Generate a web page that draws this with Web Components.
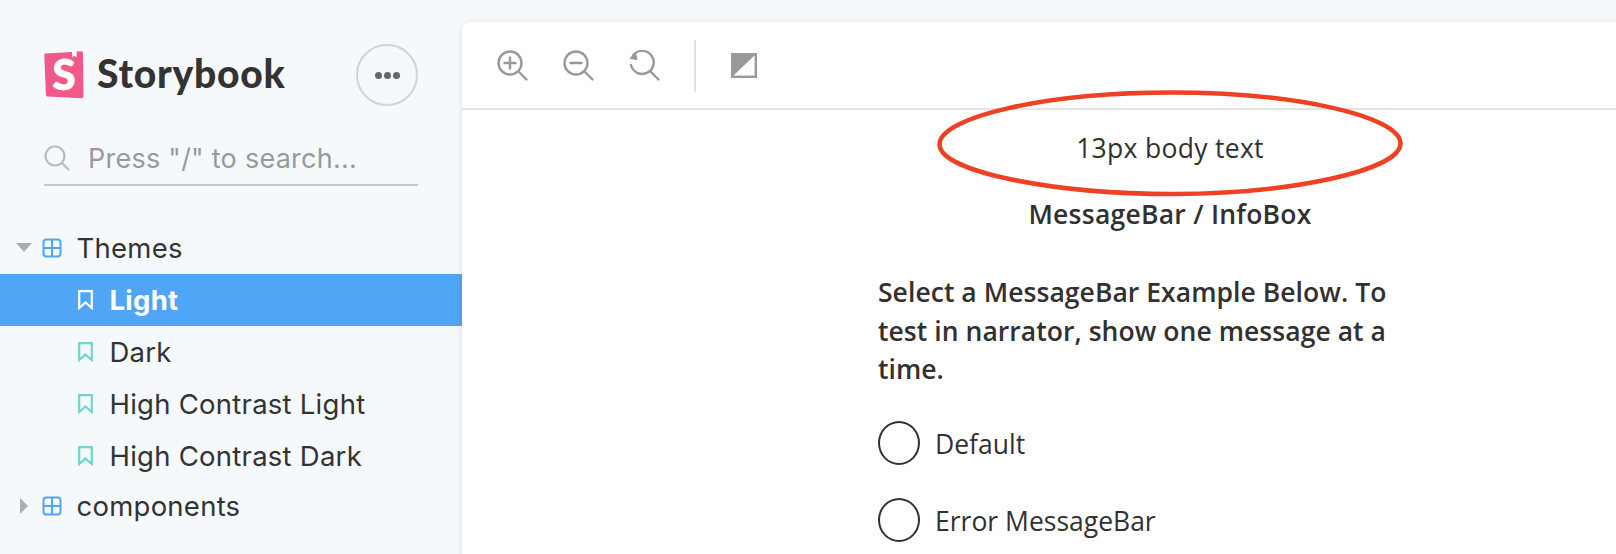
<!doctype html>
<html>
<head>
<meta charset="utf-8">
<style>
  html, body { margin: 0; height: 100%; overflow: hidden; background: #f6f9fc; }
</style>
</head>
<body>
<sb-app>
  <sb-sidebar slot="side">
    <sb-tree-item kind="group" open>Themes</sb-tree-item>
    <sb-tree-item kind="story" selected>Light</sb-tree-item>
    <sb-tree-item kind="story">Dark</sb-tree-item>
    <sb-tree-item kind="story">High Contrast Light</sb-tree-item>
    <sb-tree-item kind="story">High Contrast Dark</sb-tree-item>
    <sb-tree-item kind="group">components</sb-tree-item>
  </sb-sidebar>
  <sb-canvas slot="main">
    <sb-toolbar></sb-toolbar>
    <sb-preview>
      <sb-radio>Default</sb-radio>
      <sb-radio>Error MessageBar</sb-radio>
    </sb-preview>
  </sb-canvas>
</sb-app>
<script>
const ui = '"Inter", "Liberation Sans", sans-serif';

class SbApp extends HTMLElement {
  constructor() {
    super();
    this.attachShadow({ mode: "open" });
    this.shadowRoot.innerHTML = `
      <style>
      :host { display: grid; grid-template-columns: 462px 1fr; height: 554px; background: #f6f9fc; overflow: hidden; }
      </style>
      <slot name="side"></slot>
      <slot name="main"></slot>
    `;
  }
}
customElements.define("sb-app", SbApp);

class SbSidebar extends HTMLElement {
  constructor() {
    super();
    this.attachShadow({ mode: "open" });
    this.shadowRoot.innerHTML = `
      <style>
      :host { display: block; font-family: ${ui}; color: #333; }
      .head { padding: 44px 44px 0; }
      .brand { display: flex; align-items: center; height: 62px; }
      .brand svg { display: block; margin-top: -2px; }
      .name { font: 900 39px/1 "Lato", sans-serif; color: #333; margin: -3px 0 0 13px; letter-spacing: .75px; flex: 1; }
      .more { box-sizing: border-box; width: 62px; height: 62px; border: 2px solid #d0d4d8; border-radius: 50%; display: flex; align-items: center; justify-content: center; gap: 2px; }
      .more i { width: 7px; height: 7px; background: #666; border-radius: 50%; }
      .search { display: flex; align-items: center; height: 52px; padding-top: 8px; margin-top: 18px; border-bottom: 2px solid #c4c6c9; box-sizing: content-box; }
      .search svg { margin-right: 18px; flex: none; }
      .search span { font-size: 27px; letter-spacing: .25px; color: #999; }
      .tree { margin-top: 36px; }
      </style>
      <div class="head">
        <div class="brand">
          <svg width="40" height="50" viewBox="0 0 40 50">
            <path d="M1 4.500 L28 3 L28.200 8.500 L30.500 6.800 L32.800 8.300 L32.600 2.600 L37 2.200 C38.500 2.100 39 3 39 4 L39.500 47 C39.500 48.500 38.600 49.200 37.500 49.200 L3.500 47.500 C2.500 47.400 1.900 46.800 1.900 46 L0.300 6 C0.200 5 .5 4.600 1 4.500 Z" fill="#f1598a"/>
            <text x="20" y="40.500" text-anchor="middle" font-family="Lato, sans-serif" font-weight="900" font-size="42" fill="#fff" stroke="#fff" stroke-width=".8">S</text>
          </svg>
          <span class="name">Storybook</span>
          <div class="more"><i></i><i></i><i></i></div>
        </div>
        <div class="search">
          <svg width="26" height="26" viewBox="0 0 26 26" fill="none" stroke="#b9bcbf" stroke-width="2.200">
            <circle cx="11" cy="11" r="9.500"/><path d="M18 18 L24.500 24.500" stroke-linecap="round"/>
          </svg>
          <span>Press "/" to search...</span>
        </div>
      </div>
      <div class="tree"><slot></slot></div>
    `;
  }
}
customElements.define("sb-sidebar", SbSidebar);

class SbTreeItem extends HTMLElement {
  constructor() {
    super();
    this.attachShadow({ mode: "open" });
    const group = this.getAttribute("kind") === "group";
    const open = this.hasAttribute("open");
    const arrow = open
      ? `<svg width="16" height="9" viewBox="0 0 16 9"><path d="M0 0H16L8 9Z" fill="#aaadb0"/></svg>`
      : `<svg width="8" height="16" viewBox="0 0 8 16"><path d="M0 0L8 8L0 16Z" fill="#aaadb0"/></svg>`;
    const icon = group
      ? `<svg width="20" height="20" viewBox="0 0 20 20" fill="none" stroke="#4ea6f7" stroke-width="2"><rect x="1.500" y="1.500" width="17" height="17" rx="3"/><path d="M10 1.500V18.500M1.500 10H18.500"/></svg>`
      : `<svg width="15" height="20" viewBox="0 0 15 20" fill="none" stroke="currentColor" stroke-width="2.200"><path d="M1.200 1.200H13.800V18L7.500 12.500L1.200 18Z"/></svg>`;
    this.shadowRoot.innerHTML = `
      <style>
      :host { display: flex; align-items: center; height: 52px; font-size: 27.500px; letter-spacing: .25px; color: #333; }
      :host([kind=group]) { height: 51.500px; }
      :host([kind=group]:not([open])) { margin-top: -1.500px; }
      :host([kind=story]) { padding-left: 78px; --icon: #6dd5ce; }
      :host([selected]) { background: #4fa6f7; color: #fff; font-weight: 700; --icon: #fff; }
      .arrow { flex: none; display: flex; align-items: center; box-sizing: border-box; width: 42px; padding-left: 16px; }
      :host([kind=group]:not([open])) .arrow { padding-left: 20px; }
      .icon { flex: none; display: flex; align-items: center; width: 34.500px; color: var(--icon); }
      :host([kind=story]) .icon { width: 31.500px; }
      </style>
      ${group ? `<span class="arrow">${arrow}</span>` : ""}
      <span class="icon">${icon}</span>
      <slot></slot>
    `;
  }
}
customElements.define("sb-tree-item", SbTreeItem);

class SbCanvas extends HTMLElement {
  constructor() {
    super();
    this.attachShadow({ mode: "open" });
    this.shadowRoot.innerHTML = `
      <style>
      :host { display: block; margin-top: 22px; background: #fff; border-radius: 8px 0 0 0; box-shadow: rgba(0,0,0,.1) 0 1px 6px; height: 540px; }
      </style>
      <slot></slot>
    `;
  }
}
customElements.define("sb-canvas", SbCanvas);

class SbToolbar extends HTMLElement {
  constructor() {
    super();
    this.attachShadow({ mode: "open" });
    this.shadowRoot.innerHTML = `
      <style>
      :host { display: flex; align-items: center; box-sizing: border-box; height: 88px; padding: 1px 0 0 35px; border-bottom: 2px solid #e4e4e4; }
      svg { display: block; flex: none; }
      .tools { display: flex; gap: 35px; margin-top: -1px; }
      .sep { width: 2px; height: 52px; background: #e2e2e2; margin: 0 35px 0 34px; }
      </style>
      <div class="tools">
        <svg width="31" height="31" viewBox="0 0 31 31" fill="none" stroke="#999" stroke-width="2.400" stroke-linecap="round">
          <circle cx="13" cy="13" r="11.500"/><path d="M21.500 21.500L29.500 29.500"/><path d="M7.500 13H18.500M13 7.500V18.500"/>
        </svg>
        <svg width="31" height="31" viewBox="0 0 31 31" fill="none" stroke="#999" stroke-width="2.400" stroke-linecap="round">
          <circle cx="13" cy="13" r="11.500"/><path d="M21.500 21.500L29.500 29.500"/><path d="M7.500 13H18.500"/>
        </svg>
        <svg width="31" height="31" viewBox="0 0 31 31" fill="none" stroke="#999" stroke-width="2.400" stroke-linecap="round">
          <path d="M4 5.500A11.500 11.500 0 1 1 2 15"/><path d="M21.500 21.500L29.500 29.500"/><path d="M1.500 8.500L8 9.500L6.500 2.500Z" fill="#999" stroke-width="1"/>
        </svg>
      </div>
      <div class="sep"></div>
      <svg width="26" height="25" viewBox="0 0 26 25">
        <rect x="1.200" y="1.200" width="23.600" height="22.600" fill="#fff" stroke="#999" stroke-width="2.400"/>
        <path d="M1 1H25L1 24Z" fill="#999"/>
      </svg>
    `;
  }
}
customElements.define("sb-toolbar", SbToolbar);

class SbPreview extends HTMLElement {
  constructor() {
    super();
    this.attachShadow({ mode: "open" });
    this.shadowRoot.innerHTML = `
      <style>
      :host { display: block; position: relative; color: #323130; font-family: "Open Sans", "Noto Sans", sans-serif; }
      .col { width: 584px; margin-left: 416px; padding-top: 20px; }
      .body { font-size: 26.500px; letter-spacing: .3px; line-height: 36px; text-align: center; }
      h2 { margin: 30px 0 0; font-size: 26.500px; letter-spacing: .25px; line-height: 36px; font-weight: 600; text-align: center; }
      p { margin: 41px 0 0; width: 550px; font-size: 26.500px; letter-spacing: .05px; line-height: 38.500px; font-weight: 600; }
      .opts { margin-top: 33px; }
      .mark { position: absolute; left: 473px; top: -24px; pointer-events: none; }
      </style>
      <div class="col">
        <div class="body">13px body text</div>
        <h2>MessageBar / InfoBox</h2>
        <p>Select a MessageBar Example Below. To test in narrator, show one message at a time.</p>
        <div class="opts"><slot></slot></div>
      </div>
      <svg class="mark" width="470" height="112" viewBox="0 0 470 112" fill="none">
        <path d="M4.500 58C6 31 110 6.500 236 6.500C360 6.500 464 30 465.500 57C466 85 352 108 238 108C120 108 4 86 4.500 58Z" stroke="#ee4123" stroke-width="4.500"/>
      </svg>
    `;
  }
}
customElements.define("sb-preview", SbPreview);

class SbRadio extends HTMLElement {
  constructor() {
    super();
    this.attachShadow({ mode: "open" });
    this.shadowRoot.innerHTML = `
      <style>
      :host { display: flex; align-items: center; height: 45px; margin-bottom: 32px; font-size: 26.500px; }
      i { box-sizing: border-box; width: 42px; height: 44px; border: 2px solid #323130; border-radius: 50%; margin: -3px 15px 0 0; flex: none; }
      </style>
      <i></i><slot></slot>
    `;
  }
}
customElements.define("sb-radio", SbRadio);
</script>
</body>
</html>
